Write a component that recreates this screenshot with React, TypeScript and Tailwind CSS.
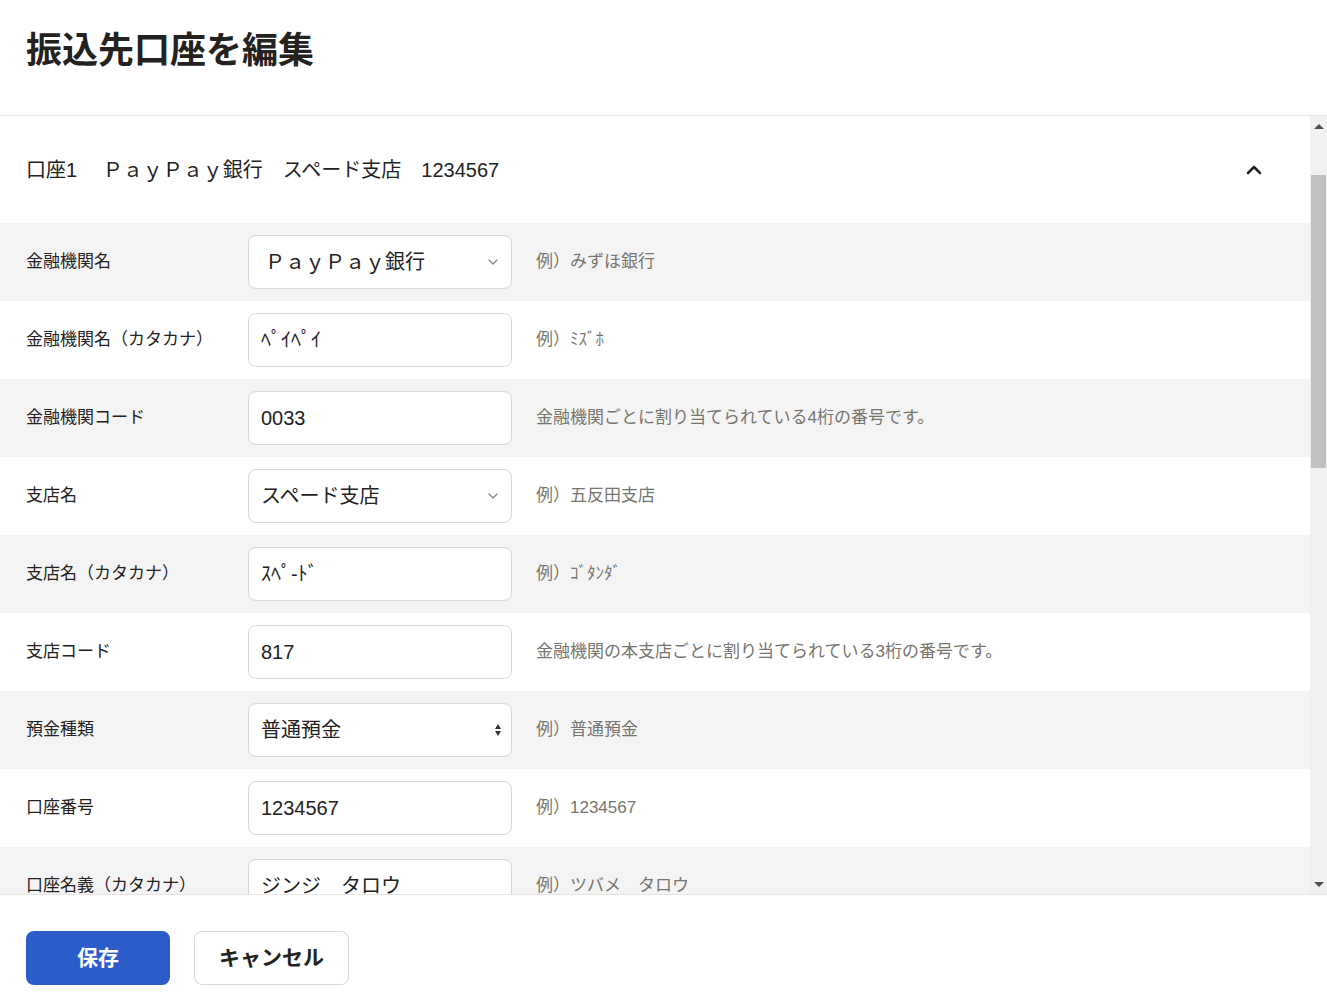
import { ChevronDown, ChevronUp } from "lucide-react";

type Row = { label: string; value: string; kind: "select" | "input" | "native"; hint: string; wide?: boolean };

const rows: Row[] = [
	{ label: "金融機関名", value: "ＰａｙＰａｙ銀行", kind: "select", hint: "例）みずほ銀行", wide: true },
	{ label: "金融機関名（カタカナ）", value: "ﾍﾟｲﾍﾟｲ", kind: "input", hint: "例）ﾐｽﾞﾎ" },
	{ label: "金融機関コード", value: "0033", kind: "input", hint: "金融機関ごとに割り当てられている4桁の番号です。" },
	{ label: "支店名", value: "スペード支店", kind: "select", hint: "例）五反田支店" },
	{ label: "支店名（カタカナ）", value: "ｽﾍﾟ-ﾄﾞ", kind: "input", hint: "例）ｺﾞﾀﾝﾀﾞ" },
	{ label: "支店コード", value: "817", kind: "input", hint: "金融機関の本支店ごとに割り当てられている3桁の番号です。" },
	{ label: "預金種類", value: "普通預金", kind: "native", hint: "例）普通預金" },
	{ label: "口座番号", value: "1234567", kind: "input", hint: "例）1234567" },
	{ label: "口座名義（カタカナ）", value: "ジンジ　タロウ", kind: "input", hint: "例）ツバメ　タロウ" },
];

const font = { fontFamily: '"Liberation Sans", "Noto Sans CJK JP", sans-serif' };

export default function App() {
	return (
		<div className="flex h-[1008px] w-[1327px] flex-col overflow-hidden bg-white text-[#23221f]" style={font}>
			<div className="flex h-[116px] shrink-0 items-center border-b border-[#e6e5e3] px-[26px] pb-[14px]">
				<h1 className="text-[36px] font-bold">振込先口座を編集</h1>
			</div>
			<div className="flex min-h-0 flex-1">
				<div className="min-w-0 flex-1 overflow-hidden">
					<div className="flex h-[107px] items-center justify-between pl-[26px] pr-[44px]">
						<span className="text-[20px] whitespace-pre">口座1　 ＰａｙＰａｙ銀行　スペード支店　1234567</span>
						<ChevronUp size={24} strokeWidth={2.5} />
					</div>
					{rows.map((r, i) => (
						<div key={r.label} className={`flex h-[78px] shrink-0 items-center ${i % 2 === 0 ? "bg-[#f5f4f4]" : "bg-white"}`}>
							<div className="w-[248px] pl-[26px] text-[17px]">{r.label}</div>
							<div className="relative flex h-[54px] w-[264px] items-center rounded-[8px] border border-[#d9d8d6] bg-white px-[12px]">
								<span className={`text-[20px] ${r.wide ? "pl-[4px]" : ""}`}>{r.value}</span>
								{r.kind === "select" && <ChevronDown size={16} className="absolute right-[10px] text-[#888]" />}
								{r.kind === "native" && (
									<span className="absolute right-[10px] flex flex-col items-center gap-[2px]">
										<span className="h-0 w-0 border-x-[3px] border-b-[5px] border-x-transparent border-b-[#333]" />
										<span className="h-0 w-0 border-x-[3px] border-t-[5px] border-x-transparent border-t-[#333]" />
									</span>
								)}
							</div>
							<div className="pl-[24px] text-[17px] text-[#77756f]">{r.hint}</div>
						</div>
					))}
				</div>
				<div className="relative flex w-[17px] shrink-0 flex-col bg-[#f1f1f1]">
					<div className="flex h-[20px] items-center justify-center">
						<span className="h-0 w-0 border-x-[5px] border-b-[5px] border-x-transparent border-b-[#505050]" />
					</div>
					<div className="mx-[1px] mt-[39px] h-[293px] bg-[#c1c1c1]" />
					<div className="absolute bottom-0 flex h-[20px] w-full items-center justify-center">
						<span className="h-0 w-0 border-x-[5px] border-t-[5px] border-x-transparent border-t-[#505050]" />
					</div>
				</div>
			</div>
			<div className="flex h-[114px] shrink-0 items-center gap-[24px] border-t border-[#e6e5e3] px-[26px] pt-[12px]">
				<button className="h-[54px] w-[144px] rounded-[8px] bg-[#2b5cc8] text-[21px] font-bold text-white">保存</button>
				<button className="h-[54px] w-[155px] rounded-[8px] border border-[#d9d8d6] bg-white text-[21px] font-bold">キャンセル</button>
			</div>
		</div>
	);
}
